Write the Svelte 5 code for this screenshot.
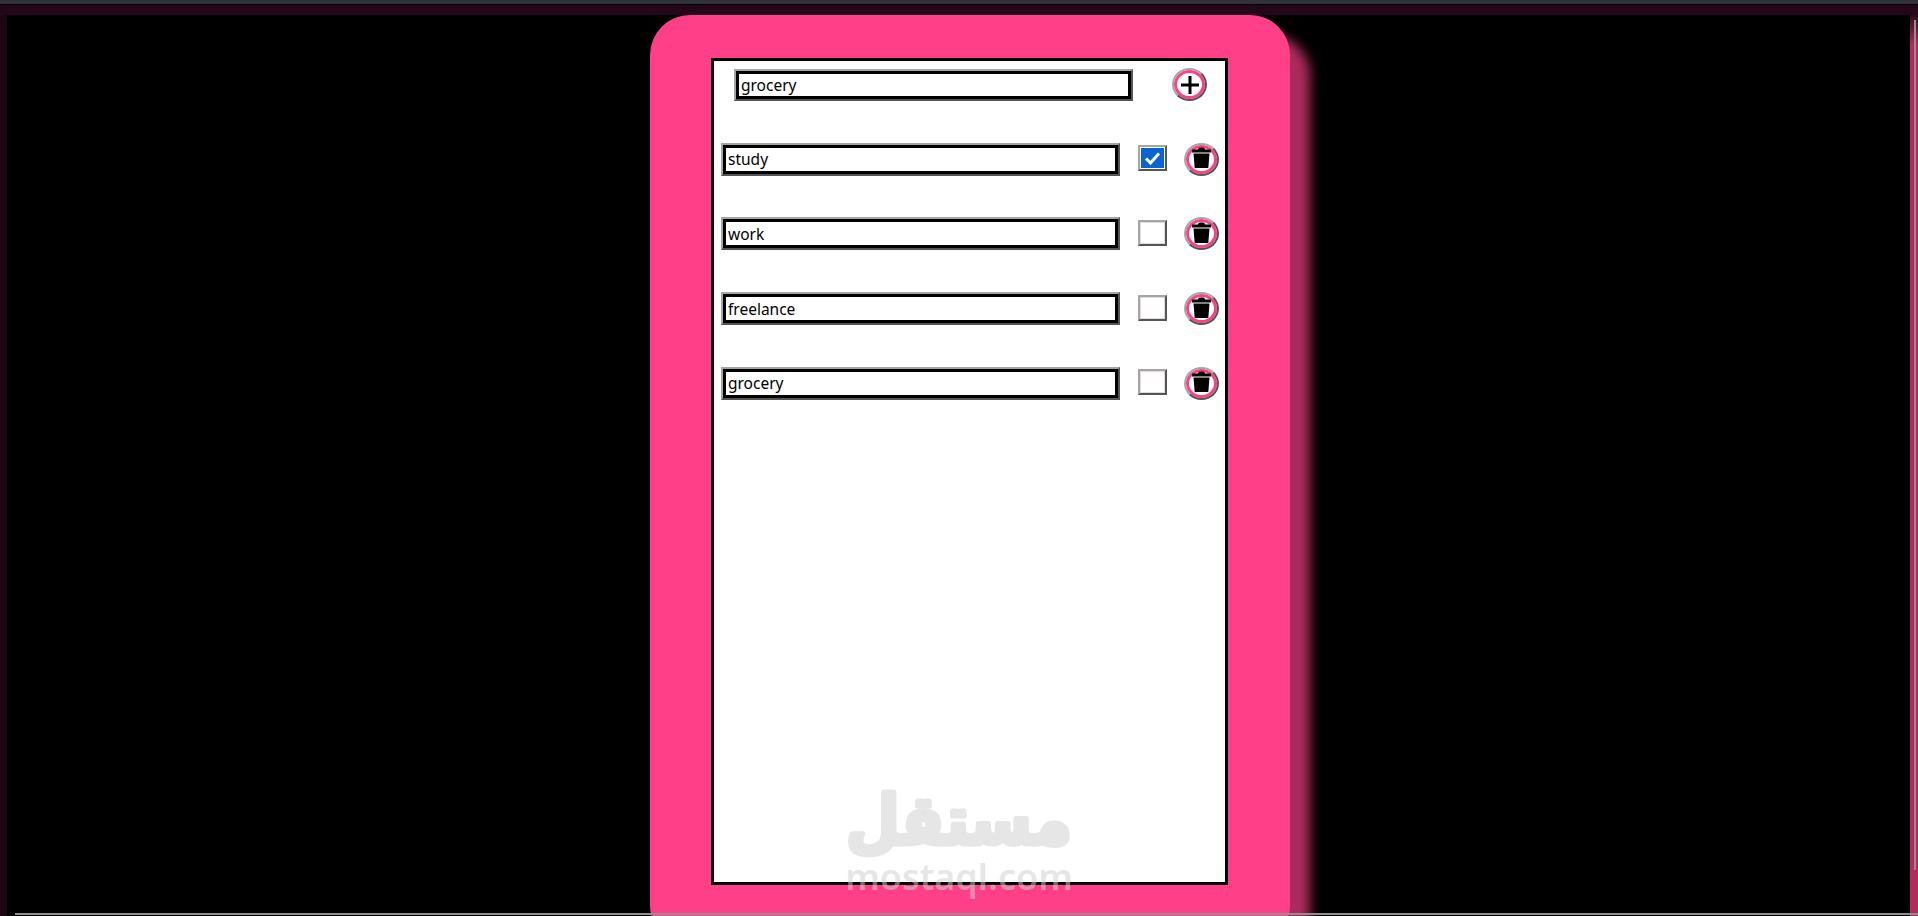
<script>
  let newTodo = $state('grocery');
  let todos = $state([
    { id: 1, text: 'study', done: true },
    { id: 2, text: 'work', done: false },
    { id: 3, text: 'freelance', done: false },
    { id: 4, text: 'grocery', done: false }
  ]);

  function addTodo() {
    if (!newTodo.trim()) return;
    todos.push({ id: Date.now(), text: newTodo, done: false });
  }

  function removeTodo(id) {
    todos = todos.filter((t) => t.id !== id);
  }
</script>

<div class="page">
  <div class="topbar"></div>
  <main class="stage">
    <section class="card">
      <div class="panel">
        <form class="add-row" onsubmit={(e) => { e.preventDefault(); addTodo(); }}>
          <input class="field" type="text" bind:value={newTodo} />
          <button class="round" type="submit" aria-label="Add">
            <svg width="20" height="20" viewBox="0 0 20 20">
              <path d="M10 1v18M1 10h18" stroke="#000" stroke-width="3" fill="none" />
            </svg>
          </button>
        </form>

        {#each todos as todo (todo.id)}
          <div class="row">
            <input class="field" type="text" bind:value={todo.text} />
            <label class="check">
              <input type="checkbox" bind:checked={todo.done} />
              <span class="box" class:on={todo.done}>
                {#if todo.done}
                  <svg width="17" height="14" viewBox="0 0 17 14">
                    <path d="M2 7.5l4.5 4.5L15 2.5" stroke="#fff" stroke-width="3" fill="none" />
                  </svg>
                {/if}
              </span>
            </label>
            <button class="round trash" type="button" aria-label="Delete" onclick={() => removeTodo(todo.id)}>
              <svg width="19" height="21" viewBox="0 0 19 21">
                <path d="M6 2.500Q6 .5 8 .5h3q2 0 2 2h6v3H0v-3zM1.500 6.500h16l-1.200 14.500H2.700z" fill="#000" />
              </svg>
            </button>
          </div>
        {/each}
      </div>
      <div class="mark">
        <svg class="mark-ar" width="230" height="72" viewBox="0 0 230 72">
          <text x="115" y="57" text-anchor="middle" direction="rtl" textLength="226" lengthAdjust="spacingAndGlyphs">مستقل</text>
        </svg>
        <span class="mark-en">mostaql.com</span>
      </div>
    </section>
    <div class="hbar"></div>
    <div class="vbar"></div>
  </main>
</div>

<style>
  :global(body) {
    margin: 0;
    background: #000;
    overflow: hidden;
  }

  .page {
    height: 916px;
    display: flex;
    flex-direction: column;
    overflow: hidden;
    font-family: "Noto Sans", sans-serif;
  }

  .topbar {
    height: 4px;
    flex: none;
    background: #32323c;
    border-bottom: 1px solid #000;
  }

  .stage {
    position: relative;
    flex: 1;
    min-height: 0;
    padding: 10px 0 0 650px;
    background:
      linear-gradient(#24081a, #24081a) 0 0 / 100% 10px no-repeat,
      linear-gradient(#1c0612, #1c0612) 0 0 / 7px 100% no-repeat,
      linear-gradient(#24081a, #24081a 8px, #b5295f 40px) 100% 0 / 8px 100% no-repeat,
      #000;
  }

  .card {
    position: relative;
    box-sizing: border-box;
    width: 640px;
    height: 930px;
    padding: 43px 61px 0;
    background: #ff4088;
    border-radius: 40px;
    box-shadow: 20px 20px 12px rgba(255, 64, 136, 0.68);
  }

  .panel {
    box-sizing: border-box;
    width: 517px;
    height: 827px;
    border: 3px solid #000;
    background: #fff;
    padding: 7px 0 0 7px;
    display: flex;
    flex-direction: column;
    gap: 41.7px;
  }

  .add-row {
    display: flex;
    align-items: center;
    gap: 39px;
    margin: 0 0 0 13px;
  }

  .row {
    display: flex;
    align-items: center;
  }

  .field {
    box-sizing: border-box;
    width: 399px;
    height: 33px;
    padding: 0 0 0 5px;
    border: 2px solid;
    border-color: #a6a6a6 #555 #555 #a6a6a6;
    box-shadow: inset 0 0 0 3px #000;
    outline: none;
    background: #fff;
    color: #000;
    font: 15.5px "Noto Sans", sans-serif;
  }

  .add-row .field {
    height: 32px;
  }

  .round {
    box-sizing: border-box;
    width: 35px;
    height: 33px;
    padding: 0;
    display: flex;
    align-items: center;
    justify-content: center;
    border: 2px solid;
    border-color: #a6a6a6 #555 #555 #a6a6a6;
    border-radius: 50%;
    background: #fff;
    box-shadow: inset 0 0 0 3px #ff4088;
  }

  .row .round {
    margin-left: 17px;
  }

  .trash svg {
    margin-bottom: 3px;
  }

  .check {
    display: block;
    margin: -2px 0 0 18px;
  }

  .check input {
    position: absolute;
    opacity: 0;
    width: 0;
    height: 0;
  }

  .box {
    box-sizing: border-box;
    width: 29px;
    height: 26px;
    display: flex;
    align-items: center;
    justify-content: center;
    border: 2px solid;
    border-color: #a6a6a6 #555 #555 #a6a6a6;
    background: #fff;
    box-shadow: inset 0 0 0 1px #e4d8de;
  }

  .box.on {
    background: #0b63d6;
    box-shadow: inset 0 0 0 1px #fff;
  }

  .mark {
    position: absolute;
    left: 194px;
    top: 772px;
    width: 230px;
    display: flex;
    flex-direction: column;
    align-items: center;
    pointer-events: none;
  }

  .mark-ar {
    display: block;
    overflow: visible;
  }

  .mark-ar text {
    font: 700 68px "DejaVu Sans", sans-serif;
    fill: #e6e6e6;
    stroke: #e6e6e6;
    stroke-width: 5px;
    stroke-linejoin: round;
  }

  .mark-en {
    font: 600 36px/36px "Noto Sans", sans-serif;
    color: rgba(208, 208, 208, 0.53);
  }

  .hbar {
    position: absolute;
    left: 15px;
    right: 0;
    bottom: 1px;
    height: 2px;
    background: #8f8f8f;
  }

  .vbar {
    position: absolute;
    right: 2px;
    top: 15px;
    height: 850px;
    width: 2px;
    background: #8f8f8f;
  }
</style>
